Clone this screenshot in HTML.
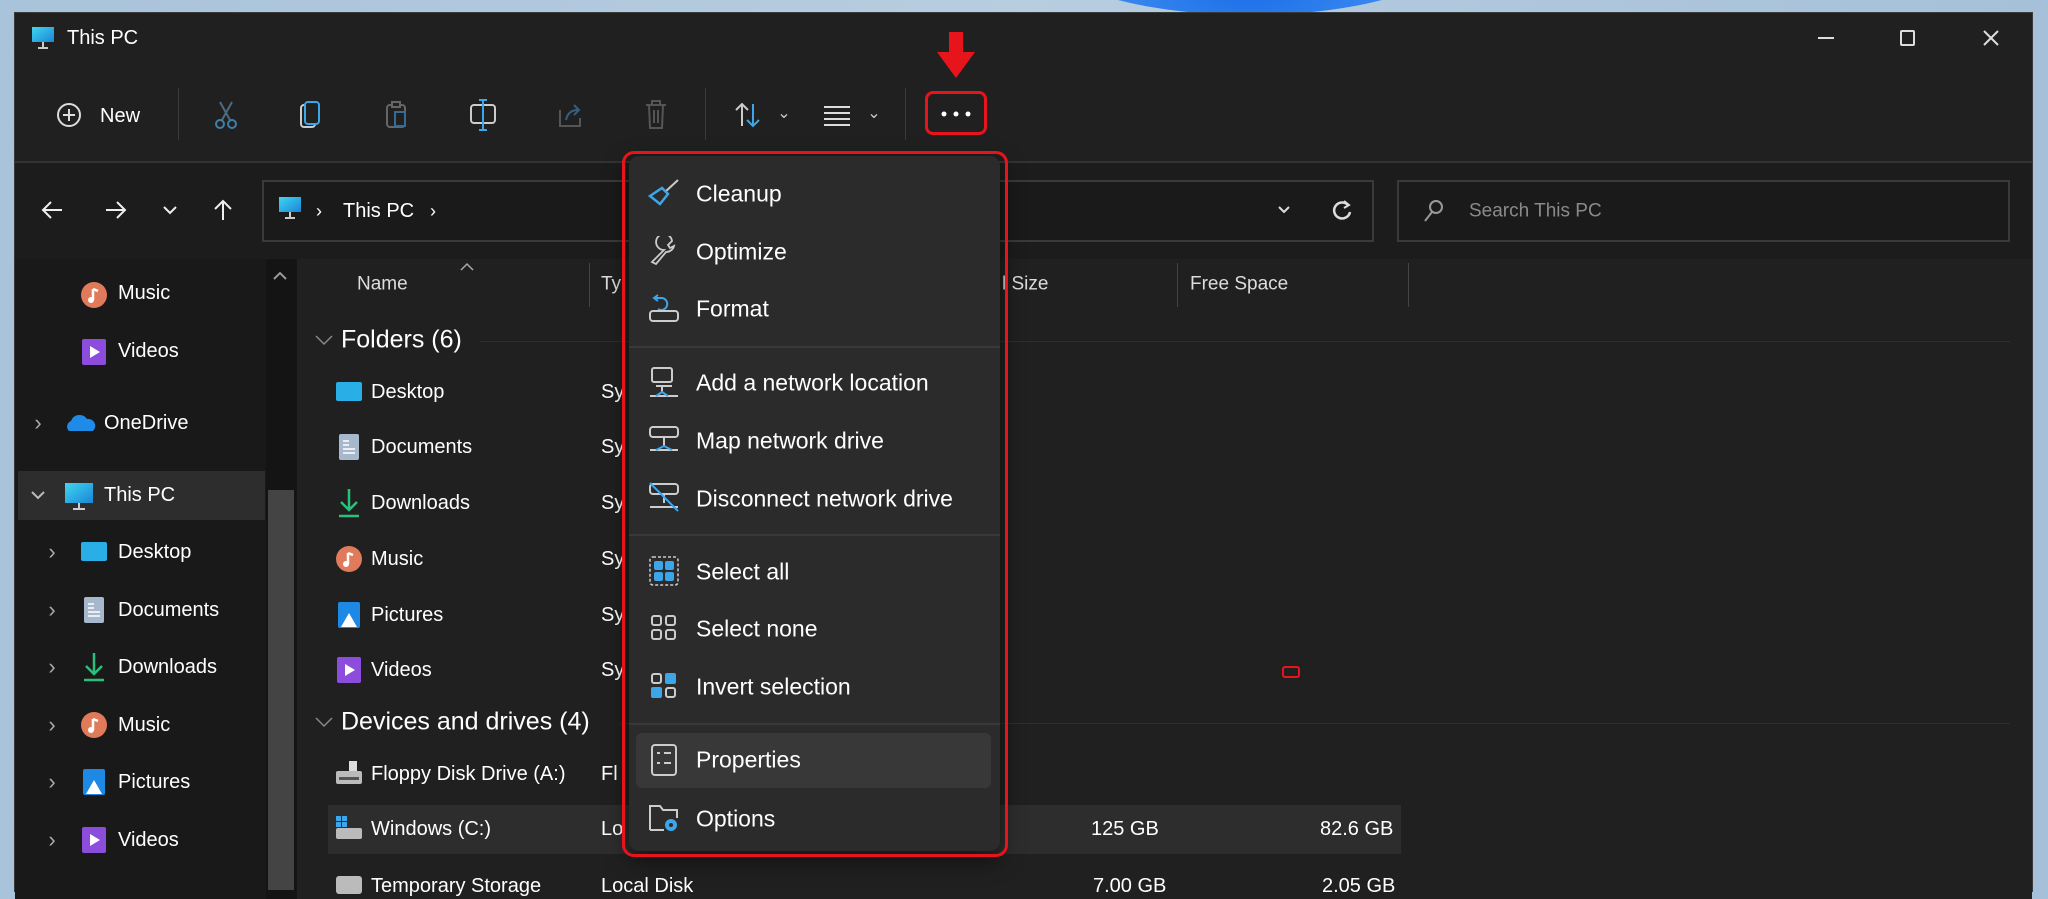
<!DOCTYPE html><html><head><meta charset="utf-8"><style>
*{margin:0;padding:0;box-sizing:border-box}
body{width:2048px;height:885px;overflow:hidden;position:relative;font-family:"Liberation Sans",sans-serif;background:linear-gradient(90deg,#a9c3da 0%,#b7cde0 50%,#a5c0d8 100%)}
.a{position:absolute}
.t{position:absolute;color:#fff;white-space:nowrap;transform:translateY(-50%);line-height:1}
.g{color:#9a9a9a}
.ch{position:absolute;color:#aaa;transform:translate(-50%,-50%);font-size:16px}
</style></head><body>
<div class="a" style="left:1040px;top:-120px;width:420px;height:135px;border-radius:50%;background:radial-gradient(ellipse at 50% 80%,#1c6ee8,#3b8af0 50%,#9ec4ec 75%,transparent 80%)"></div>
<!-- window -->
<div class="a" style="left:14px;top:12px;width:2019px;height:880px;background:#202020;border:1px solid #3a3a3a"></div>
<!-- title -->
<svg class="a" style="left:31px;top:26px" width="24" height="24" viewBox="0 0 24 24"><rect x="1" y="1" width="22" height="15" fill="#2ab0e8"/><rect x="1" y="1" width="22" height="15" fill="url(#m)"/><defs><linearGradient id="m" x1="0" y1="0" x2="1" y2="1"><stop offset="0" stop-color="#3fd6f0"/><stop offset="1" stop-color="#1a86d6"/></linearGradient></defs><rect x="11" y="16" width="2" height="5" fill="#ccc"/><rect x="7" y="21" width="10" height="2" fill="#ccc"/></svg>
<div class="t" style="left:67px;top:38px;font-size:20px">This PC</div>
<div class="a" style="left:1818px;top:37px;width:16px;height:2px;background:#ddd"></div>
<div class="a" style="left:1900px;top:30px;width:15px;height:16px;border:2px solid #ddd;border-radius:2px"></div>
<svg class="a" style="left:1982px;top:29px" width="18" height="18"><path d="M2 2L16 16M16 2L2 16" stroke="#ddd" stroke-width="2"/></svg>
<!-- red arrow -->
<svg class="a" style="left:935px;top:32px" width="42" height="48"><rect x="14" y="0" width="14" height="22" fill="#e8141c"/><path d="M2 20H40L21 46Z" fill="#e8141c"/></svg>
<!-- toolbar -->
<svg class="a" style="left:56px;top:102px" width="26" height="26"><circle cx="13" cy="13" r="11" fill="none" stroke="#ddd" stroke-width="2"/><path d="M13 7V19M7 13H19" stroke="#ddd" stroke-width="2"/></svg>
<div class="t" style="left:100px;top:116px;font-size:20px">New</div>
<div class="a" style="left:178px;top:88px;width:1px;height:52px;background:#3a3a3a"></div>
<svg class="a" style="left:212px;top:100px" width="28" height="30"><path d="M8 2L18 20M20 2L10 20" stroke="#4e6a80" stroke-width="2"/><circle cx="8" cy="24" r="4" fill="none" stroke="#3f7fa8" stroke-width="2"/><circle cx="20" cy="24" r="4" fill="none" stroke="#3f7fa8" stroke-width="2"/></svg>
<svg class="a" style="left:298px;top:100px" width="26" height="30"><rect x="3" y="5" width="14" height="22" rx="3" fill="none" stroke="#ccc" stroke-width="2"/><rect x="7" y="2" width="14" height="22" rx="3" fill="#202020" stroke="#3da6e8" stroke-width="2"/></svg>
<svg class="a" style="left:384px;top:100px" width="26" height="30"><rect x="3" y="5" width="18" height="22" rx="3" fill="none" stroke="#666" stroke-width="2"/><rect x="8" y="2" width="8" height="5" fill="#202020" stroke="#666" stroke-width="2"/><rect x="11" y="12" width="10" height="14" fill="none" stroke="#356c90" stroke-width="2"/></svg>
<svg class="a" style="left:468px;top:98px" width="30" height="34"><rect x="3" y="7" width="24" height="18" rx="3" fill="none" stroke="#ccc" stroke-width="2"/><path d="M15 2V32M11 2H19M11 32H19" stroke="#3da6e8" stroke-width="2"/></svg>
<svg class="a" style="left:556px;top:100px" width="28" height="30"><path d="M4 10V26H24V18" fill="none" stroke="#555" stroke-width="2"/><path d="M10 20Q12 10 22 10M18 5L23 10L18 15" fill="none" stroke="#355f80" stroke-width="2"/></svg>
<svg class="a" style="left:643px;top:99px" width="26" height="32"><path d="M3 6H23M9 6V2H17V6M6 6L7 29H19L20 6M11 11V24M15 11V24" fill="none" stroke="#555" stroke-width="2"/></svg>
<div class="a" style="left:705px;top:88px;width:1px;height:52px;background:#3a3a3a"></div>
<svg class="a" style="left:733px;top:100px" width="30" height="30"><path d="M9 26V4M3 10L9 4L15 10" fill="none" stroke="#ccc" stroke-width="2"/><path d="M20 4V26M14 20L20 26L26 20" fill="none" stroke="#3da6e8" stroke-width="2"/></svg>
<div class="ch" style="left:784px;top:113px;color:#ccc">⌄</div>
<svg class="a" style="left:822px;top:104px" width="30" height="22"><path d="M2 3H28M2 9H28M2 15H28M2 21H28" stroke="#ddd" stroke-width="2"/></svg>
<div class="ch" style="left:874px;top:113px;color:#ccc">⌄</div>
<div class="a" style="left:905px;top:88px;width:1px;height:52px;background:#3a3a3a"></div>
<div class="a" style="left:925px;top:91px;width:62px;height:44px;border:3px solid #e8141c;border-radius:8px"></div>
<svg class="a" style="left:940px;top:110px" width="32" height="8"><circle cx="4" cy="4" r="2.5" fill="#fff"/><circle cx="16" cy="4" r="2.5" fill="#fff"/><circle cx="28" cy="4" r="2.5" fill="#fff"/></svg>
<div class="a" style="left:15px;top:161px;width:2017px;height:2px;background:#333"></div>
<!-- nav row -->
<div class="a" style="left:15px;top:163px;width:2017px;height:96px;background:#1c1c1c"></div>
<svg class="a" style="left:40px;top:198px" width="24" height="24"><path d="M22 12H3M11 4L3 12L11 20" fill="none" stroke="#eee" stroke-width="2"/></svg>
<svg class="a" style="left:104px;top:198px" width="24" height="24"><path d="M2 12H21M13 4L21 12L13 20" fill="none" stroke="#eee" stroke-width="2"/></svg>
<svg class="a" style="left:162px;top:204px" width="16" height="12"><path d="M2 3L8 9L14 3" fill="none" stroke="#eee" stroke-width="2"/></svg>
<svg class="a" style="left:211px;top:198px" width="24" height="24"><path d="M12 22V3M4 11L12 3L20 11" fill="none" stroke="#eee" stroke-width="2"/></svg>
<div class="a" style="left:262px;top:180px;width:1112px;height:62px;border:2px solid #3a3a3a;background:#1a1a1a"></div>
<svg class="a" style="left:278px;top:196px" width="24" height="24"><rect x="1" y="1" width="22" height="15" fill="url(#m)"/><rect x="11" y="16" width="2" height="5" fill="#ccc"/><rect x="7" y="21" width="10" height="2" fill="#ccc"/></svg>
<div class="t" style="left:316px;top:211px;font-size:18px">›</div>
<div class="t" style="left:343px;top:211px;font-size:20px">This PC</div>
<div class="t" style="left:430px;top:211px;font-size:18px">›</div>
<svg class="a" style="left:1276px;top:204px" width="16" height="12"><path d="M3 3L8 8L13 3" fill="none" stroke="#ddd" stroke-width="2"/></svg>
<svg class="a" style="left:1330px;top:198px" width="24" height="26"><path d="M18 7A8 8 0 1 0 20 14" fill="none" stroke="#ddd" stroke-width="2.5"/><path d="M14 3L19 7L14 10" fill="none" stroke="#ddd" stroke-width="2"/></svg>
<div class="a" style="left:1397px;top:180px;width:613px;height:62px;border:2px solid #3a3a3a;background:#1a1a1a"></div>
<svg class="a" style="left:1422px;top:198px" width="24" height="26"><circle cx="14" cy="9" r="6" fill="none" stroke="#999" stroke-width="2"/><path d="M10 14L3 23" stroke="#999" stroke-width="2"/></svg>
<div class="t g" style="left:1469px;top:211px;font-size:19px;color:#8a8a8a">Search This PC</div>
<!-- nav pane -->
<div class="a" style="left:15px;top:259px;width:251px;height:640px;background:#191919"></div>
<div class="a" style="left:266px;top:259px;width:31px;height:640px;background:#141414"></div>
<div class="a" style="left:268px;top:490px;width:26px;height:400px;background:#444"></div>
<svg class="a" style="left:272px;top:270px" width="16" height="12"><path d="M2 9L8 3L14 9" fill="none" stroke="#999" stroke-width="2"/></svg>
<div class="a" style="left:18px;top:471px;width:247px;height:49px;background:#2d2d2d"></div>
<!-- content -->
<div class="a" style="left:297px;top:259px;width:1735px;height:640px;background:#202020"></div>
<!-- nav items -->
<div id="nav"></div>
<svg class="a" style="left:80px;top:281px" width="28" height="28"><circle cx="14" cy="14" r="13" fill="#e07a5a"/><path d="M13 8V19M13 8L18 10" stroke="#fff" stroke-width="2.5" fill="none"/><circle cx="11" cy="19" r="3" fill="#fff"/></svg>
<div class="t" style="left:118px;top:293px;font-size:20px">Music</div>
<svg class="a" style="left:81px;top:338px" width="26" height="28"><rect x="1" y="1" width="24" height="26" rx="2" fill="#8c4ddc"/><path d="M9 8V20L19 14Z" fill="#fff"/></svg>
<div class="t" style="left:118px;top:351px;font-size:20px">Videos</div>
<div class="ch" style="left:38px;top:423px;font-size:22px">›</div>
<svg class="a" style="left:65px;top:413px" width="32" height="20"><path d="M4 18A6 6 0 0 1 6 8A9 9 0 0 1 22 6A7 7 0 0 1 28 18Z" fill="#1e8be8"/></svg>
<div class="t" style="left:104px;top:423px;font-size:20px">OneDrive</div>
<svg class="a" style="left:30px;top:489px" width="16" height="12"><path d="M2 3L8 9L14 3" fill="none" stroke="#bbb" stroke-width="2"/></svg>
<svg class="a" style="left:64px;top:482px" width="30" height="30"><rect x="1" y="1" width="28" height="20" fill="url(#m)"/><rect x="14" y="21" width="2" height="5" fill="#ccc"/><rect x="9" y="26" width="12" height="2" fill="#ccc"/></svg>
<div class="t" style="left:104px;top:495px;font-size:20px">This PC</div>
<div class="ch" style="left:52px;top:552px;font-size:22px">›</div>
<svg class="a" style="left:80px;top:541px" width="28" height="22"><rect x="1" y="1" width="26" height="19" rx="2" fill="#2aaee6"/></svg>
<div class="t" style="left:118px;top:552px;font-size:20px">Desktop</div>
<div class="ch" style="left:52px;top:610px;font-size:22px">›</div>
<svg class="a" style="left:83px;top:596px" width="22" height="28"><rect x="1" y="1" width="20" height="26" rx="2" fill="#a8b8cc"/><path d="M5 8H11M5 12H11M5 16H17M5 20H17" stroke="#fff" stroke-width="1.5"/></svg>
<div class="t" style="left:118px;top:610px;font-size:20px">Documents</div>
<div class="ch" style="left:52px;top:667px;font-size:22px">›</div>
<svg class="a" style="left:82px;top:652px" width="24" height="30"><path d="M12 1V22M4 14L12 22L20 14" fill="none" stroke="#28c07a" stroke-width="2.5"/><path d="M2 28H22" stroke="#28c07a" stroke-width="2.5"/></svg>
<div class="t" style="left:118px;top:667px;font-size:20px">Downloads</div>
<div class="ch" style="left:52px;top:725px;font-size:22px">›</div>
<svg class="a" style="left:80px;top:711px" width="28" height="28"><circle cx="14" cy="14" r="13" fill="#e07a5a"/><path d="M13 8V19M13 8L18 10" stroke="#fff" stroke-width="2.5" fill="none"/><circle cx="11" cy="19" r="3" fill="#fff"/></svg>
<div class="t" style="left:118px;top:725px;font-size:20px">Music</div>
<div class="ch" style="left:52px;top:782px;font-size:22px">›</div>
<svg class="a" style="left:82px;top:768px" width="24" height="28"><rect x="1" y="1" width="22" height="26" rx="2" fill="#1e88e5"/><path d="M4 26L12 12L20 26Z" fill="#fff"/></svg>
<div class="t" style="left:118px;top:782px;font-size:20px">Pictures</div>
<div class="ch" style="left:52px;top:840px;font-size:22px">›</div>
<svg class="a" style="left:81px;top:826px" width="26" height="28"><rect x="1" y="1" width="24" height="26" rx="2" fill="#8c4ddc"/><path d="M9 8V20L19 14Z" fill="#fff"/></svg>
<div class="t" style="left:118px;top:840px;font-size:20px">Videos</div>
<!-- header -->
<svg class="a" style="left:459px;top:262px" width="16" height="10"><path d="M2 8L8 2L14 8" fill="none" stroke="#aaa" stroke-width="1.5"/></svg>
<div class="t" style="left:357px;top:284px;font-size:19px;color:#ddd">Name</div>
<div class="a" style="left:589px;top:263px;width:1px;height:44px;background:#444"></div>
<div class="t" style="left:601px;top:284px;font-size:19px;color:#ddd">Ty</div>
<div class="t" style="left:1002px;top:284px;font-size:19px;color:#ddd">l Size</div>
<div class="a" style="left:1177px;top:263px;width:1px;height:44px;background:#444"></div>
<div class="t" style="left:1190px;top:284px;font-size:19px;color:#ddd">Free Space</div>
<div class="a" style="left:1408px;top:263px;width:1px;height:44px;background:#444"></div>
<!-- groups -->
<svg class="a" style="left:314px;top:334px" width="20" height="12"><path d="M2 2L10 10L18 2" fill="none" stroke="#888" stroke-width="1.5"/></svg>
<div class="t" style="left:341px;top:340px;font-size:25px">Folders (6)</div>
<div class="a" style="left:480px;top:341px;width:1530px;height:1px;background:#2e2e2e"></div>
<svg class="a" style="left:335px;top:381px" width="28" height="22"><rect x="1" y="1" width="26" height="19" rx="2" fill="#2aaee6"/></svg>
<div class="t" style="left:371px;top:392px;font-size:20px">Desktop</div>
<svg class="a" style="left:338px;top:433px" width="22" height="28"><rect x="1" y="1" width="20" height="26" rx="2" fill="#a8b8cc"/><path d="M5 8H11M5 12H11M5 16H17M5 20H17" stroke="#fff" stroke-width="1.5"/></svg>
<div class="t" style="left:371px;top:447px;font-size:20px">Documents</div>
<svg class="a" style="left:337px;top:488px" width="24" height="30"><path d="M12 1V22M4 14L12 22L20 14" fill="none" stroke="#28c07a" stroke-width="2.5"/><path d="M2 28H22" stroke="#28c07a" stroke-width="2.5"/></svg>
<div class="t" style="left:371px;top:503px;font-size:20px">Downloads</div>
<svg class="a" style="left:335px;top:545px" width="28" height="28"><circle cx="14" cy="14" r="13" fill="#e07a5a"/><path d="M13 8V19M13 8L18 10" stroke="#fff" stroke-width="2.5" fill="none"/><circle cx="11" cy="19" r="3" fill="#fff"/></svg>
<div class="t" style="left:371px;top:559px;font-size:20px">Music</div>
<svg class="a" style="left:337px;top:601px" width="24" height="28"><rect x="1" y="1" width="22" height="26" rx="2" fill="#1e88e5"/><path d="M4 26L12 12L20 26Z" fill="#fff"/></svg>
<div class="t" style="left:371px;top:615px;font-size:20px">Pictures</div>
<svg class="a" style="left:336px;top:656px" width="26" height="28"><rect x="1" y="1" width="24" height="26" rx="2" fill="#8c4ddc"/><path d="M9 8V20L19 14Z" fill="#fff"/></svg>
<div class="t" style="left:371px;top:670px;font-size:20px">Videos</div>
<div class="t" style="left:601px;top:392px;font-size:20px">Sy</div>
<div class="t" style="left:601px;top:447px;font-size:20px">Sy</div>
<div class="t" style="left:601px;top:503px;font-size:20px">Sy</div>
<div class="t" style="left:601px;top:559px;font-size:20px">Sy</div>
<div class="t" style="left:601px;top:615px;font-size:20px">Sy</div>
<div class="t" style="left:601px;top:670px;font-size:20px">Sy</div>
<svg class="a" style="left:314px;top:716px" width="20" height="12"><path d="M2 2L10 10L18 2" fill="none" stroke="#888" stroke-width="1.5"/></svg>
<div class="t" style="left:341px;top:722px;font-size:25px">Devices and drives (4)</div>
<div class="a" style="left:620px;top:723px;width:1390px;height:1px;background:#2e2e2e"></div>
<svg class="a" style="left:335px;top:760px" width="28" height="26"><rect x="14" y="1" width="8" height="10" fill="#ddd"/><rect x="1" y="11" width="26" height="13" rx="2" fill="#bbb"/><rect x="4" y="17" width="20" height="3" fill="#555"/></svg>
<div class="t" style="left:371px;top:774px;font-size:20px">Floppy Disk Drive (A:)</div>
<div class="t" style="left:601px;top:774px;font-size:20px">Fl</div>
<div class="a" style="left:328px;top:805px;width:1073px;height:49px;background:#2d2d2d"></div>
<svg class="a" style="left:335px;top:815px" width="28" height="26"><rect x="1" y="1" width="5" height="5" fill="#3da6e8"/><rect x="7" y="1" width="5" height="5" fill="#3da6e8"/><rect x="1" y="7" width="5" height="5" fill="#3da6e8"/><rect x="7" y="7" width="5" height="5" fill="#3da6e8"/><rect x="1" y="13" width="26" height="11" rx="2" fill="#bbb"/></svg>
<div class="t" style="left:371px;top:829px;font-size:20px">Windows (C:)</div>
<div class="t" style="left:601px;top:829px;font-size:20px">Lo</div>
<div class="t" style="left:1091px;top:829px;font-size:20px">125 GB</div>
<div class="t" style="left:1320px;top:829px;font-size:20px">82.6 GB</div>
<svg class="a" style="left:335px;top:875px" width="28" height="20"><rect x="1" y="1" width="26" height="18" rx="3" fill="#bbb"/></svg>
<div class="t" style="left:371px;top:886px;font-size:20px">Temporary Storage</div>
<div class="t" style="left:601px;top:886px;font-size:20px">Local Disk</div>
<div class="t" style="left:1093px;top:886px;font-size:20px">7.00 GB</div>
<div class="t" style="left:1322px;top:886px;font-size:20px">2.05 GB</div>
<div class="a" style="left:1282px;top:666px;width:18px;height:12px;border:2px solid #e8141c;border-radius:3px"></div>
<!-- menu -->
<div class="a" style="left:629px;top:156px;width:371px;height:695px;background:#2b2b2b;border-radius:10px;box-shadow:0 8px 24px rgba(0,0,0,.6)"></div>
<div class="a" style="left:629px;top:346px;width:371px;height:2px;background:#383838"></div>
<div class="a" style="left:629px;top:534px;width:371px;height:2px;background:#383838"></div>
<div class="a" style="left:629px;top:723px;width:371px;height:2px;background:#383838"></div>
<div class="a" style="left:636px;top:733px;width:355px;height:55px;background:#383838;border-radius:6px"></div>
<svg class="a" style="left:648px;top:178px" width="32" height="30"><path d="M30 2L17 14" stroke="#ccc" stroke-width="2"/><path d="M2 18L12 26L20 16L14 10Z" fill="none" stroke="#3da6e8" stroke-width="2.5"/></svg>
<div class="t" style="left:696px;top:194px;font-size:23px">Cleanup</div>
<svg class="a" style="left:648px;top:236px" width="32" height="30"><path d="M4 26L16 14A8 8 0 1 1 24 5L20 9L22 12L26 10A8 8 0 0 1 18 16L8 28Z" fill="none" stroke="#ccc" stroke-width="1.8"/></svg>
<div class="t" style="left:696px;top:252px;font-size:23px">Optimize</div>
<svg class="a" style="left:648px;top:291px" width="32" height="32"><path d="M10 4L6 7L10 10" fill="none" stroke="#3da6e8" stroke-width="2"/><path d="M6 7H14A6 6 0 1 1 10 18" fill="none" stroke="#3da6e8" stroke-width="2"/><rect x="2" y="20" width="28" height="10" rx="3" fill="none" stroke="#ccc" stroke-width="2"/></svg>
<div class="t" style="left:696px;top:309px;font-size:23px">Format</div>
<svg class="a" style="left:648px;top:366px" width="32" height="34"><rect x="4" y="2" width="20" height="14" rx="2" fill="none" stroke="#ccc" stroke-width="2"/><path d="M8 20H24M14 20V26M2 30H30" stroke="#ccc" stroke-width="2"/><path d="M8 30L14 26L20 30" fill="none" stroke="#3da6e8" stroke-width="2"/></svg>
<div class="t" style="left:696px;top:383px;font-size:23px">Add a network location</div>
<svg class="a" style="left:648px;top:424px" width="32" height="32"><rect x="2" y="3" width="28" height="10" rx="3" fill="none" stroke="#ccc" stroke-width="2"/><path d="M16 13V22M2 26H30" stroke="#ccc" stroke-width="2"/><path d="M8 26L16 22L24 26" fill="none" stroke="#3da6e8" stroke-width="2"/></svg>
<div class="t" style="left:696px;top:441px;font-size:23px">Map network drive</div>
<svg class="a" style="left:648px;top:481px" width="32" height="32"><rect x="2" y="3" width="28" height="10" rx="3" fill="none" stroke="#ccc" stroke-width="2"/><path d="M16 13V22M2 26H30" stroke="#ccc" stroke-width="2"/><path d="M2 2L30 30" stroke="#3da6e8" stroke-width="2"/></svg>
<div class="t" style="left:696px;top:499px;font-size:23px">Disconnect network drive</div>
<svg class="a" style="left:648px;top:555px" width="32" height="32"><rect x="2" y="2" width="28" height="28" rx="3" fill="none" stroke="#ccc" stroke-width="1.5" stroke-dasharray="3 2"/><rect x="6" y="6" width="9" height="9" rx="2" fill="#3da6e8"/><rect x="17" y="6" width="9" height="9" rx="2" fill="#3da6e8"/><rect x="6" y="17" width="9" height="9" rx="2" fill="#3da6e8"/><rect x="17" y="17" width="9" height="9" rx="2" fill="#3da6e8"/></svg>
<div class="t" style="left:696px;top:572px;font-size:23px">Select all</div>
<svg class="a" style="left:648px;top:612px" width="32" height="32"><g fill="none" stroke="#ccc" stroke-width="2"><rect x="4" y="4" width="9" height="9" rx="2"/><rect x="18" y="4" width="9" height="9" rx="2"/><rect x="4" y="18" width="9" height="9" rx="2"/><rect x="18" y="18" width="9" height="9" rx="2"/></g></svg>
<div class="t" style="left:696px;top:629px;font-size:23px">Select none</div>
<svg class="a" style="left:648px;top:670px" width="32" height="32"><g fill="none" stroke="#ccc" stroke-width="2"><rect x="4" y="4" width="9" height="9" rx="2"/><rect x="18" y="18" width="9" height="9" rx="2"/></g><rect x="17" y="3" width="11" height="11" rx="2" fill="#3da6e8"/><rect x="3" y="17" width="11" height="11" rx="2" fill="#3da6e8"/></svg>
<div class="t" style="left:696px;top:687px;font-size:23px">Invert selection</div>
<svg class="a" style="left:648px;top:743px" width="32" height="34"><rect x="4" y="2" width="24" height="30" rx="3" fill="none" stroke="#ccc" stroke-width="2"/><path d="M9 10H12M16 10H23M9 20H12M16 20H23" stroke="#ccc" stroke-width="2"/></svg>
<div class="t" style="left:696px;top:760px;font-size:23px">Properties</div>
<svg class="a" style="left:648px;top:802px" width="32" height="32"><path d="M2 28V4H12L15 8H29V16" fill="none" stroke="#ccc" stroke-width="2"/><path d="M2 28H16" stroke="#ccc" stroke-width="2"/><circle cx="23" cy="23" r="6" fill="#3da6e8"/><circle cx="23" cy="23" r="2" fill="#2b2b2b"/></svg>
<div class="t" style="left:696px;top:819px;font-size:23px">Options</div>
<div class="a" style="left:622px;top:151px;width:386px;height:706px;border:3px solid #e8141c;border-radius:12px"></div>
</body></html>
